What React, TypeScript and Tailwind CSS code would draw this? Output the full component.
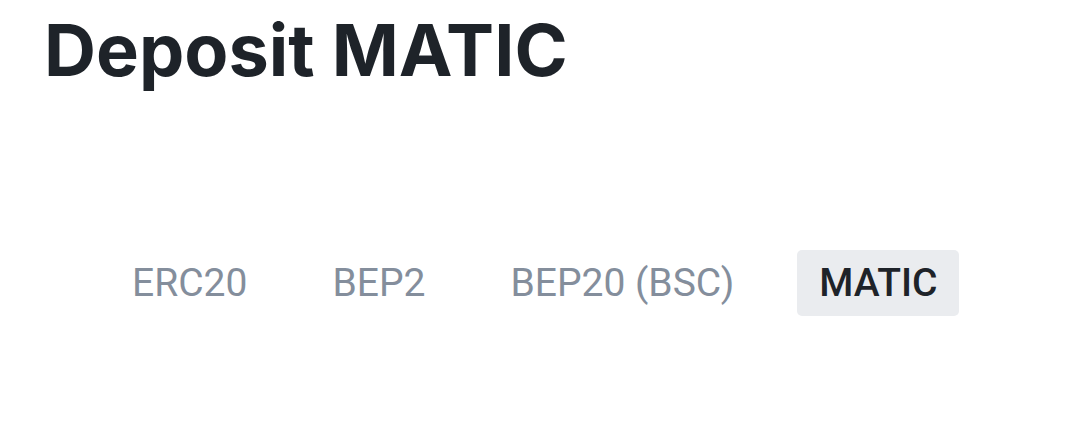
const tabs = ['ERC20', 'BEP2', 'BEP20 (BSC)', 'MATIC'];

export default function App() {
  const active = 'MATIC';

  return (
    <div className="h-[440px] w-[1080px] bg-white">
      <h1
        className="pl-[44px] pt-[6px] text-[72px] font-bold leading-[88px] text-[#1e2329]"
        style={{ fontFamily: 'Inter, "Noto Sans", sans-serif' }}
      >
        Deposit MATIC
      </h1>

      <div
        className="mt-[156px] ml-[110px] flex items-center gap-[41px]"
        style={{ fontFamily: 'Roboto, "Liberation Sans", sans-serif' }}
      >
        {tabs.map((tab) => (
          <button
            key={tab}
            className={
              tab === active
                ? 'h-[66px] rounded-[5px] bg-[#eaecef] px-[22px] text-[39px] font-medium text-[#1e2329]'
                : 'h-[66px] rounded-[5px] px-[22px] text-[39px] text-[#848e9c]'
            }
          >
            {tab}
          </button>
        ))}
      </div>
    </div>
  );
}
